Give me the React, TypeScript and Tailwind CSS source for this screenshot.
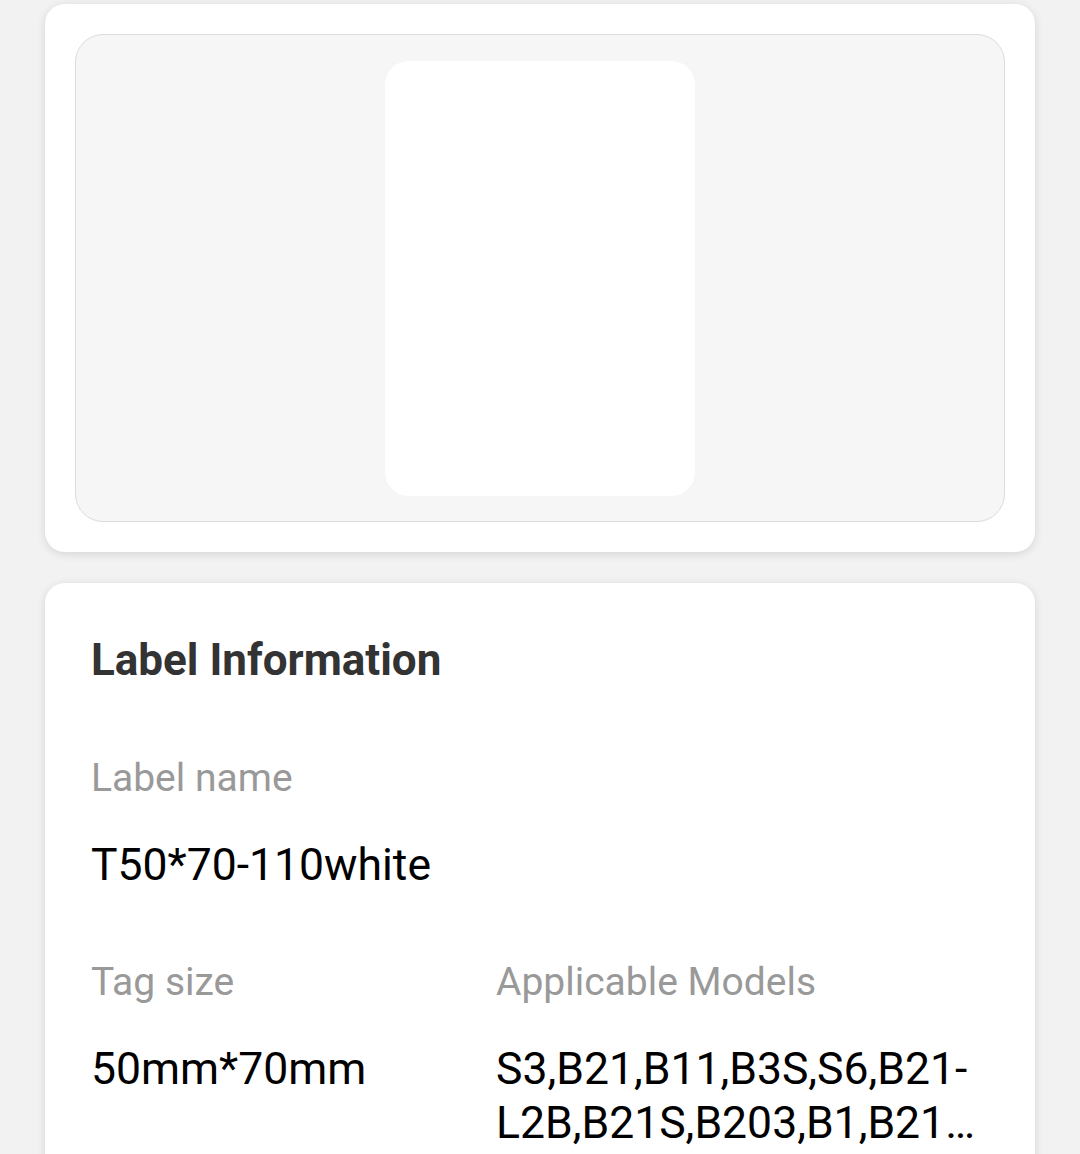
import * as React from "react";

// ── Data ─────────────────────────────────────────────────────────────────────

const LABEL = {
  name: "T50*70-110white",
  size: "50mm*70mm",
  models: "S3,B21,B11,B3S,S6,B21-L2B,B21S,B203,B1,B21C2B,B3,B21PRO",
};

// ── Component ────────────────────────────────────────────────────────────────

export default function App() {
  return (
    <div
      className="min-h-[1154px] bg-[#f2f2f2] px-[45px] pt-[4px] pb-10"
      style={{ fontFamily: "Roboto, 'Noto Sans', sans-serif" }}
    >
      {/* Preview card */}
      <div className="rounded-[20px] bg-white p-[30px] shadow-[0_2px_10px_rgba(0,0,0,0.12)]">
        <div className="flex h-[488px] justify-center rounded-[28px] border border-[#dcdcdc] bg-[#f6f6f6] pt-[26px]">
          <div className="h-[435px] w-[310px] rounded-[24px] bg-white" />
        </div>
      </div>

      {/* Label information */}
      <div className="mt-[31px] rounded-[20px] bg-white px-[46px] pt-[51px] pb-10 shadow-[0_2px_10px_rgba(0,0,0,0.12)]">
        <h2 className="text-[44px] leading-[52px] font-bold text-[#333]">
          Label Information
        </h2>

        <div className="mt-[69px]">
          <p className="text-[39px] leading-[46px] text-[#999]">Label name</p>
          <p className="mt-[38px] text-[44.5px] leading-[52px] text-black">
            {LABEL.name}
          </p>
        </div>

        <div className="mt-[68px] grid grid-cols-[405px_minmax(0,1fr)]">
          <div className="min-w-0">
            <p className="text-[39px] leading-[46px] text-[#999]">Tag size</p>
            <p className="mt-[37px] text-[44.5px] leading-[54px] text-black">
              {LABEL.size}
            </p>
          </div>
          <div className="min-w-0">
            <p className="text-[39px] leading-[46px] text-[#999]">
              Applicable Models
            </p>
            <p className="mt-[37px] line-clamp-2 break-words text-[44.5px] leading-[54px] text-black">
              {LABEL.models}
            </p>
          </div>
        </div>
      </div>
    </div>
  );
}
